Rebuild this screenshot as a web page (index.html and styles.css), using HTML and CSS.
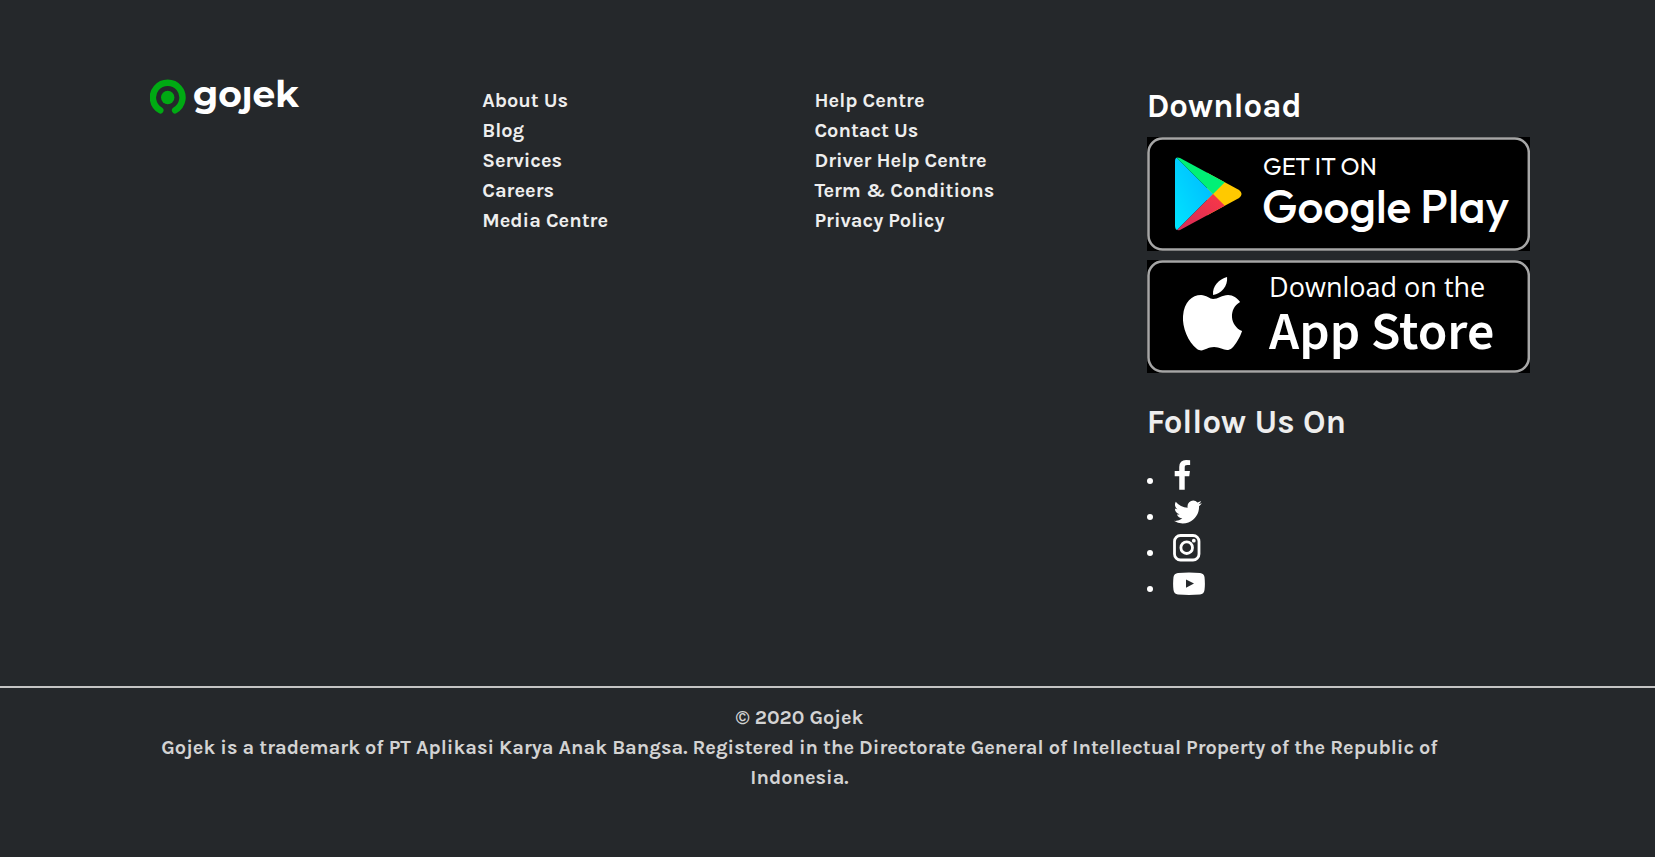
FILE: index.html
```html
<!DOCTYPE html>
<html lang="en">
<head>
<meta charset="utf-8">
<title>Gojek</title>
<link rel="stylesheet" href="styles.css">
</head>
<body>
<footer class="footer">
  <div class="footer-main">
    <a class="brand" href="#" aria-label="gojek">
      <svg class="brand-logo" viewBox="0 -9 160 56" aria-hidden="true">
        <path d="M10.3 31.300A14.8 14.8 0 1 1 25.1 31.300" fill="none" stroke="#00aa13" stroke-width="6.4" stroke-linecap="round"/>
        <circle cx="17.7" cy="18.500" r="6.7" fill="#00aa13"/>
        <text class="brand-name" x="43" y="28">goȷek</text>
      </svg>
    </a>
    <nav class="links" aria-label="Company">
      <a href="#">About Us</a>
      <a href="#">Blog</a>
      <a href="#">Services</a>
      <a href="#">Careers</a>
      <a href="#">Media Centre</a>
    </nav>
    <nav class="links" aria-label="Support">
      <a href="#">Help Centre</a>
      <a href="#">Contact Us</a>
      <a href="#">Driver Help Centre</a>
      <a href="#">Term &amp; Conditions</a>
      <a href="#">Privacy Policy</a>
    </nav>
    <div class="apps">
      <h2 class="title title-bright">Download</h2>
      <a class="badge" href="#">
        <svg viewBox="0 0 383 114">
          <defs>
            <linearGradient id="blue" x1="1" y1="0" x2="0" y2="1"><stop offset="0" stop-color="#00b4ff"/><stop offset="1" stop-color="#00e6ff"/></linearGradient>
            <linearGradient id="red" x1="1" y1="0" x2="0" y2="1"><stop offset="0" stop-color="#ff3a44"/><stop offset="1" stop-color="#d0285a"/></linearGradient>
            <clipPath id="play"><path d="M28 24Q28 19 33 21L92 53Q97 57 92 61L33 93Q28 94 28 89Z"/></clipPath>
          </defs>
          <rect width="383" height="114" fill="#000"/>
          <rect x="1.500" y="1.500" width="380" height="111" rx="14" fill="#000" stroke="#a6a6a6" stroke-width="2.500"/>
          <g clip-path="url(#play)">
            <rect x="60" y="30" width="40" height="54" fill="#ffc900"/>
            <path d="M28 19L66 57L28 95Z" fill="url(#blue)"/>
            <path d="M28 19V10L90 33L66 57Z" fill="#00f076"/>
            <path d="M28 95V104L90 81L66 57Z" fill="url(#red)"/>
          </g>
          <text class="play-small" x="116" y="38">GET IT ON</text>
          <text class="play-large" x="115" y="86">Google Play</text>
        </svg>
      </a>
      <a class="badge" href="#">
        <svg viewBox="0 0 383 113">
          <rect width="383" height="113" fill="#000"/>
          <rect x="1.500" y="1.500" width="380" height="110" rx="14" fill="#000" stroke="#a6a6a6" stroke-width="2.500"/>
          <path d="M80 17C81 26 74 34 66 35C65 26 72 19 80 17Z" fill="#fff"/>
          <path d="M66 39C71 39 75 35 81 35C86 35 90 38 93 42C81 49 83 66 95 71C93 77 89 84 85 88C79 93 75 87 67 87C59 87 56 93 50 89C41 82 35 67 36 56C37 42 45 35 54 35C59 35 63 39 66 39Z" fill="#fff"/>
          <text class="store-small" x="122" y="37">Download on the</text>
          <text class="store-large" x="122" y="89">App Store</text>
        </svg>
      </a>
      <h2 class="title follow">Follow Us On</h2>
      <ul class="social">
        <li><a href="#" aria-label="Facebook"><svg viewBox="0 0 1024 1792"><path d="M959 12v264H802q-86 0-116 36t-30 108v189h293l-39 296H656v759H350V905H95V609h255V391q0-186 104-288.500T731 0q147 0 228 12z"/></svg></a></li>
        <li><a href="#" aria-label="Twitter"><svg viewBox="0 0 1664 1792"><path d="M1620 408q-67 98-162 167 1 14 1 42 0 130-38 259.500T1305.500 1125 1121 1335.500t-258 146-323 54.500q-271 0-496-145 35 4 78 4 225 0 401-138-105-2-188-64.500T221 1033q33 5 61 5 43 0 85-11-112-23-185.500-111.500T108 710v-4q68 38 146 41-66-44-105-115t-39-154q0-88 44-163 121 149 294.500 238.500T820 653q-8-38-8-74 0-134 94.500-228.500T1135 256q140 0 236 102 109-21 205-78-37 115-142 178 93-10 186-50z"/></svg></a></li>
        <li><a href="#" aria-label="Instagram"><svg viewBox="0 0 28 32"><rect x="1.500" y="3.500" width="24.500" height="24.500" rx="6" fill="none" stroke="#fff" stroke-width="2.800"/><circle cx="13.700" cy="15.700" r="5.800" fill="none" stroke="#fff" stroke-width="2.800"/><circle cx="20.800" cy="8.700" r="1.900"/></svg></a></li>
        <li><a href="#" aria-label="YouTube"><svg viewBox="0 0 32 32"><path fill-rule="evenodd" d="M5 5Q16 4.200 27 5Q31 5.400 31.500 9Q32.300 16 31.500 22Q31 26 27 26.500Q16 27.300 5 26.500Q1 26 .500 22Q-.300 16 .500 9Q1 5.400 5 5ZM13 11.500V19.700L21 15.600Z"/></svg></a></li>
      </ul>
    </div>
  </div>
  <div class="legal">
    <p>© 2020 Gojek</p>
    <p>Gojek is a trademark of PT Aplikasi Karya Anak Bangsa. Registered in the Directorate General of Intellectual Property of the Republic of Indonesia.</p>
  </div>
</footer>
</body>
</html>
```
FILE: styles.css
```css
* {
  box-sizing: border-box;
}

body {
  margin: 0;
  background: #25282b;
  color: #eeeeee;
  font: 700 20px/30px Karla, Inter, sans-serif;
}

a {
  color: inherit;
  text-decoration: none;
}

.footer {
  min-height: 100vh;
}

.footer-main {
  display: grid;
  grid-template-columns: 13fr 13fr 13fr 15fr;
  padding: 70px 125px 84px 150px;
}

.brand-logo {
  display: block;
  width: 160px;
}

.brand-name {
  fill: #fff;
  font: 700 36px Montserrat, Inter, sans-serif;
}

.links {
  display: flex;
  flex-direction: column;
  align-items: flex-start;
  padding-top: 16px;
}

.apps {
  padding-top: 16px;
}

.title {
  margin: 0;
  font-size: 33px;
  line-height: 40px;
  font-weight: 700;
}

.title-bright {
  margin-bottom: 11px;
  color: #fff;
}

.badge,
.badge svg {
  display: block;
}

.badge + .badge {
  margin-top: 9px;
}

.badge text {
  fill: #fff;
}

.play-small {
  font: 400 24px "Product Sans", Outfit, Lato, sans-serif;
}

.play-large {
  font: 500 46px "Product Sans", Outfit, Lato, sans-serif;
}

.store-small {
  font: 500 27px "Open Sans", "Noto Sans", sans-serif;
}

.store-large {
  font: 600 54px "Myriad Pro", "Source Sans 3", "Source Sans Pro", "Noto Sans", sans-serif;
}

.follow {
  margin-top: 29px;
}

.social {
  margin: 16px 0 0;
  padding: 0;
  list-style: none;
}

.social li {
  display: flex;
  align-items: center;
  gap: 20px;
  height: 36px;
}

.social li::before {
  content: "";
  width: 6px;
  height: 6px;
  margin-top: 10px;
  border-radius: 50%;
  background: #fff;
}

.social svg {
  display: block;
  height: 32px;
  fill: #fff;
}

.legal {
  padding: 15px 206px 50px 150px;
  border-top: 2px solid #c4c4c4;
  color: #d3d3d3;
  text-align: center;
}

.legal p {
  margin: 0;
}
```
